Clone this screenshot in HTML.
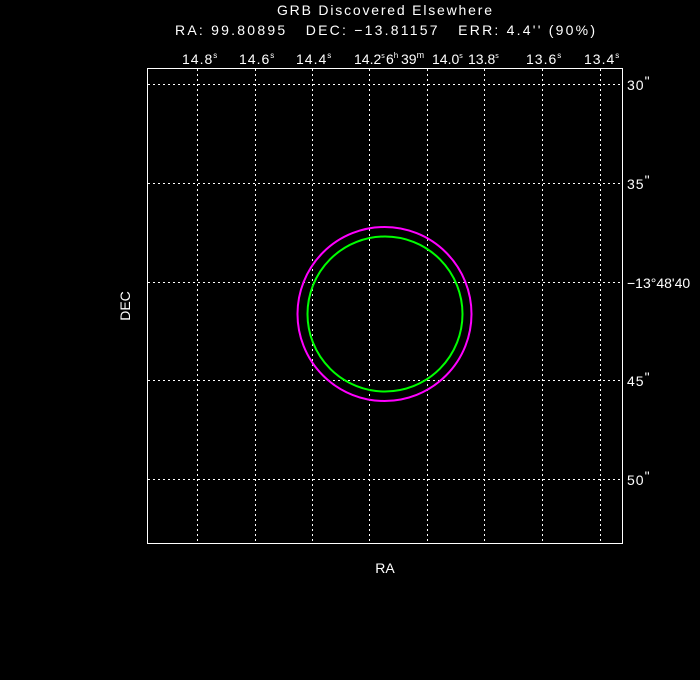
<!DOCTYPE html>
<html><head><meta charset="utf-8"><style>
html,body{margin:0;padding:0;background:#000;width:700px;height:680px;overflow:hidden}
svg{display:block}
text{font-family:"Liberation Sans",sans-serif;fill:#fff;font-size:14px;white-space:pre}
</style></head><body>
<svg width="700" height="680" xmlns="http://www.w3.org/2000/svg" xml:space="preserve">
<text x="277" y="15" textLength="215" lengthAdjust="spacing" font-size="15">GRB Discovered Elsewhere</text>
<text x="175" y="35" textLength="420" lengthAdjust="spacing" font-size="15">RA: 99.80895   DEC: −13.81157   ERR: 4.4'' (90%)</text>
<g font-size="13">
<text x="182" y="64" font-size="13" letter-spacing="1">14.8<tspan dy="-6" font-size="8">s</tspan></text>
<text x="239" y="64" font-size="13" letter-spacing="1">14.6<tspan dy="-6" font-size="8">s</tspan></text>
<text x="296" y="64" font-size="13" letter-spacing="1">14.4<tspan dy="-6" font-size="8">s</tspan></text>
<text x="354" y="64" font-size="12">14.2<tspan dy="-6" font-size="7">s</tspan></text>
<text x="386" y="64" font-size="12">6<tspan dy="-6" font-size="8">h</tspan></text>
<text x="401" y="64" font-size="12">39<tspan dy="-6" font-size="9">m</tspan></text>
<text x="432" y="64" font-size="12">14.0<tspan dy="-6" font-size="7">s</tspan></text>
<text x="468" y="64" font-size="12">13.8<tspan dy="-6" font-size="7">s</tspan></text>
<text x="526" y="64" font-size="13" letter-spacing="1">13.6<tspan dy="-6" font-size="8">s</tspan></text>
<text x="584" y="64" font-size="13" letter-spacing="1">13.4<tspan dy="-6" font-size="8">s</tspan></text>
</g>
<g font-size="13">
<text x="627" y="90" font-size="13" letter-spacing="1">30<tspan dy="-4">"</tspan></text>
<text x="627" y="189" font-size="13" letter-spacing="1">35<tspan dy="-4">"</tspan></text>
<text x="627" y="288" font-size="13">−13°48'40</text>
<text x="627" y="386" font-size="13" letter-spacing="1">45<tspan dy="-4">"</tspan></text>
<text x="627" y="485" font-size="13" letter-spacing="1">50<tspan dy="-4">"</tspan></text>
</g>
<g stroke="#fff" stroke-width="1" stroke-dasharray="2,3" fill="none">
<line x1="148" y1="84.5" x2="622" y2="84.5"/>
<line x1="148" y1="183.5" x2="622" y2="183.5"/>
<line x1="148" y1="282.5" x2="622" y2="282.5"/>
<line x1="148" y1="380.5" x2="622" y2="380.5"/>
<line x1="148" y1="479.5" x2="622" y2="479.5"/>
<line x1="197.5" y1="69" x2="197.5" y2="543"/>
<line x1="255.5" y1="69" x2="255.5" y2="543"/>
<line x1="312.5" y1="69" x2="312.5" y2="543"/>
<line x1="369.5" y1="69" x2="369.5" y2="543"/>
<line x1="427.5" y1="69" x2="427.5" y2="543"/>
<line x1="484.5" y1="69" x2="484.5" y2="543"/>
<line x1="542.5" y1="69" x2="542.5" y2="543"/>
<line x1="600.5" y1="69" x2="600.5" y2="543"/>
</g>
<rect x="147.5" y="68.5" width="475" height="475" fill="none" stroke="#fff" stroke-width="1"/>
<circle cx="384.5" cy="314" r="87" fill="none" stroke="#ff00ff" stroke-width="2"/>
<circle cx="385" cy="314" r="77.5" fill="none" stroke="#00ff00" stroke-width="2"/>
<text x="385" y="573" text-anchor="middle" font-size="15">RA</text>
<text x="0" y="0" text-anchor="middle" font-size="15" transform="translate(130,306) rotate(-90)">DEC</text>
</svg>
</body></html>
